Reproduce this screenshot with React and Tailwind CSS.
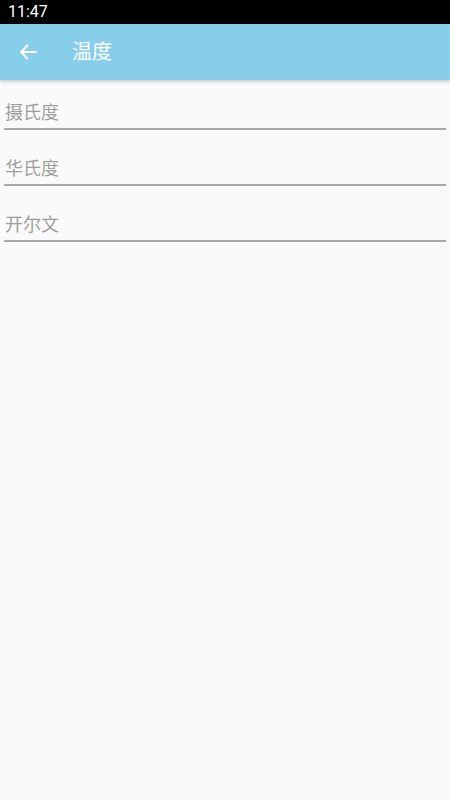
export default function App() {
  const fields = ['摄氏度', '华氏度', '开尔文'];

  return (
    <div
      className="w-[450px] h-[800px] bg-[#fafafa] flex flex-col overflow-hidden"
      style={{ fontFamily: 'Roboto, "Noto Sans CJK SC", sans-serif' }}
    >
      {/* status bar */}
      <div className="h-6 bg-black flex items-center px-2">
        <span className="text-white text-[16px] leading-none">11:47</span>
      </div>

      {/* toolbar */}
      <div className="h-14 bg-[#87ceeb] flex items-center shadow-[0_2px_3px_rgba(0,0,0,0.18)] relative z-10">
        <div className="w-[72px] flex items-center pl-[18px]">
          <svg width="20" height="20" viewBox="0 0 24 24" fill="none" stroke="white" strokeWidth="2.4" strokeLinecap="square">
            <path d="M21 12H4" />
            <path d="M11 4.5L3.8 12l7.2 7.5" />
          </svg>
        </div>
        <span className="text-white text-[20px]">温度</span>
      </div>

      {/* fields */}
      <div className="flex flex-col px-1 pt-[4px]">
        {fields.map((label) => (
          <div key={label} className="h-14 flex flex-col justify-end pb-[10px]">
            <div className="text-[18px] text-[#9e9e9e] leading-[24px] pb-[3px] pl-[1px]">{label}</div>
            <div className="h-[2px] bg-[#a8a8a8]" />
          </div>
        ))}
      </div>
    </div>
  );
}
